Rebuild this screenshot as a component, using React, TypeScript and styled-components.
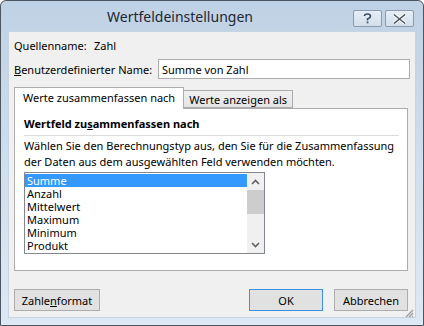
import styled, { createGlobalStyle } from "styled-components";

const Global = createGlobalStyle`
  html, body { margin: 0; padding: 0; background: #ffffff; }
  body { font-family: "Noto Sans", "Open Sans", sans-serif; font-size: 11px; color: #000; white-space: nowrap; }
`;

const items = ["Summe", "Anzahl", "Mittelwert", "Maximum", "Minimum", "Produkt"];

const App = () => {
  return (
    <>
      <Global />
      <Window>
        <TitleBar>
          <Title>Wertfeldeinstellungen</Title>
          <Caption>
            <CapButton>
              <svg width="9" height="11" viewBox="0 0 9 11">
                <path d="M1.5 3 Q1.5 1 4.5 1 Q7.5 1 7.5 3.2 Q7.5 4.6 5.5 5.4 L4.5 6 L4.5 7.5" fill="none" stroke="#3b4a5c" strokeWidth="1.6" />
                <rect x="3.7" y="8.6" width="1.7" height="1.7" fill="#3b4a5c" />
              </svg>
            </CapButton>
            <CapButton>
              <svg width="13" height="10" viewBox="0 0 13 10">
                <path d="M1.5 1 L11.5 9 M11.5 1 L1.5 9" stroke="#ffffff" strokeWidth="3.4" strokeLinecap="square" />
                <path d="M1.5 1 L11.5 9 M11.5 1 L1.5 9" stroke="#4c5866" strokeWidth="1.6" strokeLinecap="square" />
              </svg>
            </CapButton>
          </Caption>
        </TitleBar>
        <Content>
          <InfoRow>
            <Label $width={80}>Quellenname:</Label>
            <span>Zahl</span>
          </InfoRow>
          <NameRow>
            <Label $width={144}>
              <u>B</u>enutzerdefinierter Name:
            </Label>
            <TextInput>Summe von Zahl</TextInput>
          </NameRow>
          <Tabs>
            <Tab $active>Werte zusammenfassen nach</Tab>
            <Tab>Werte anzeigen als</Tab>
          </Tabs>
          <Panel>
            <GroupTitle>
              Wertfeld zu<u>s</u>ammenfassen nach
            </GroupTitle>
            <Rule />
            <Description>
              Wählen Sie den Berechnungstyp aus, den Sie für die Zusammenfassung
              <br />
              der Daten aus dem ausgewählten Feld verwenden möchten.
            </Description>
            <ListBox>
              <Items>
                {items.map((it, i) => (
                  <Item key={it} $selected={i === 0}>
                    {it}
                  </Item>
                ))}
              </Items>
              <ScrollBar>
                <Arrow>
                  <svg width="9" height="6" viewBox="0 0 9 6">
                    <path d="M1 5 L4.5 1.5 L8 5" fill="none" stroke="#606060" strokeWidth="1.6" />
                  </svg>
                </Arrow>
                <Thumb />
                <Track />
                <Arrow>
                  <svg width="9" height="6" viewBox="0 0 9 6">
                    <path d="M1 1 L4.5 4.5 L8 1" fill="none" stroke="#606060" strokeWidth="1.6" />
                  </svg>
                </Arrow>
              </ScrollBar>
            </ListBox>
          </Panel>
          <Footer>
            <Button $width={86}>
              Zahle<u>n</u>format
            </Button>
            <Spacer />
            <Button $width={74} $default>
              OK
            </Button>
            <Button $width={74}>Abbrechen</Button>
          </Footer>
          <Grip>
            <svg width="10" height="10" viewBox="0 0 10 10">
              <path d="M9 2 L2 9 M9 5 L5 9 M9 8 L8 9" stroke="#9a9a9a" strokeWidth="1.2" />
            </svg>
          </Grip>
        </Content>
      </Window>
    </>
  );
};

export default App;

const Window = styled.div`
  width: 424px;
  height: 326px;
  box-sizing: border-box;
  border: 1px solid #4d5560;
  border-radius: 6px 6px 0 0;
  background: linear-gradient(180deg, #bfd1e4 0%, #d3e1ef 60%, #dce8f4 100%);
  display: flex;
  flex-direction: column;
  overflow: hidden;
`;

const TitleBar = styled.div`
  height: 30px;
  display: flex;
  align-items: flex-start;
  position: relative;
`;

const Title = styled.div`
  position: absolute;
  left: 0;
  right: 0;
  top: 6px;
  text-align: center;
  padding-right: 70px;
  font-size: 14px;
  color: #1e2733;
  padding-left: 6px;
`;

const Caption = styled.div`
  margin-left: auto;
  margin-top: 9px;
  margin-right: 9px;
  display: flex;
  gap: 3px;
`;

const CapButton = styled.div`
  width: 29px;
  height: 17px;
  box-sizing: border-box;
  border: 1px solid #8c9aab;
  border-radius: 2px;
  background: linear-gradient(180deg, #e6eef7 0%, #d2deea 100%);
  display: flex;
  align-items: center;
  justify-content: center;
`;

const Content = styled.div`
  flex: 1;
  margin: 0 7px 7px 7px;
  background: #f0f0f0;
  border: 1px solid #c7d4e2;
  padding: 0 5px 0 5px;
  display: flex;
  flex-direction: column;
  position: relative;
`;

const InfoRow = styled.div`
  display: flex;
  align-items: center;
  height: 16px;
  margin-top: 5px;
`;

const Label = styled.span<{ $width: number }>`
  width: ${(p) => p.$width}px;
  flex: none;
`;

const NameRow = styled.div`
  display: flex;
  align-items: center;
  margin-top: 6px;
`;

const TextInput = styled.div`
  flex: 1;
  height: 20px;
  box-sizing: border-box;
  border: 1px solid #acacac;
  background: #fff;
  padding: 0 3px;
  display: flex;
  align-items: center;
`;

const Tabs = styled.div`
  display: flex;
  align-items: flex-end;
  margin-top: 8px;
  height: 21px;
  position: relative;
  z-index: 1;
`;

const Tab = styled.div<{ $active?: boolean }>`
  box-sizing: border-box;
  height: ${(p) => (p.$active ? 22 : 18)}px;
  padding: 0 ${(p) => (p.$active ? 8 : 5)}px;
  border: 1px solid #acacac;
  border-bottom: ${(p) => (p.$active ? "none" : "1px solid #acacac")};
  margin-left: ${(p) => (p.$active ? 0 : -1)}px;
  margin-bottom: ${(p) => (p.$active ? -1 : 0)}px;
  background: ${(p) => (p.$active ? "#fff" : "linear-gradient(180deg, #f0f0f0 0%, #e5e5e5 100%)")};
  display: flex;
  align-items: center;
  padding-bottom: ${(p) => (p.$active ? 2 : 0)}px;
`;

const Panel = styled.div`
  box-sizing: border-box;
  height: 163px;
  margin-right: 2px;
  background: #fff;
  border: 1px solid #acacac;
  padding: 7px 8px 0 9px;
  display: flex;
  flex-direction: column;
`;

const GroupTitle = styled.div`
  font-weight: bold;
  height: 16px;
  line-height: 16px;
`;

const Rule = styled.div`
  height: 1px;
  background: #dcdcdc;
  margin-top: 3px;
`;

const Description = styled.div`
  margin-top: 2px;
  line-height: 16px;
`;

const ListBox = styled.div`
  margin-top: 2px;
  width: 241px;
  height: 82px;
  box-sizing: border-box;
  border: 1px solid #828790;
  display: flex;
  background: #fff;
`;

const Items = styled.div`
  flex: 1;
  padding-top: 1px;
`;

const Item = styled.div<{ $selected?: boolean }>`
  height: 13px;
  line-height: 13px;
  padding-left: 2px;
  background: ${(p) => (p.$selected ? "#3399ff" : "transparent")};
  color: ${(p) => (p.$selected ? "#fff" : "#000")};
`;

const ScrollBar = styled.div`
  width: 17px;
  background: #f0f0f0;
  display: flex;
  flex-direction: column;
`;

const Arrow = styled.div`
  height: 17px;
  display: flex;
  align-items: center;
  justify-content: center;
`;

const Thumb = styled.div`
  height: 24px;
  background: #cdcdcd;
`;

const Track = styled.div`
  flex: 1;
`;

const Footer = styled.div`
  display: flex;
  gap: 11px;
  margin-top: 18px;
  margin-right: 2px;
`;

const Spacer = styled.div`
  flex: 1;
`;

const Button = styled.div<{ $width: number; $default?: boolean }>`
  width: ${(p) => p.$width}px;
  height: 22px;
  box-sizing: border-box;
  border: 1px solid ${(p) => (p.$default ? "#3c8fde" : "#adadad")};
  background: #e1e1e1;
  display: flex;
  align-items: center;
  justify-content: center;
`;

const Grip = styled.div`
  position: absolute;
  right: 1px;
  bottom: 1px;
  width: 10px;
  height: 10px;
`;
